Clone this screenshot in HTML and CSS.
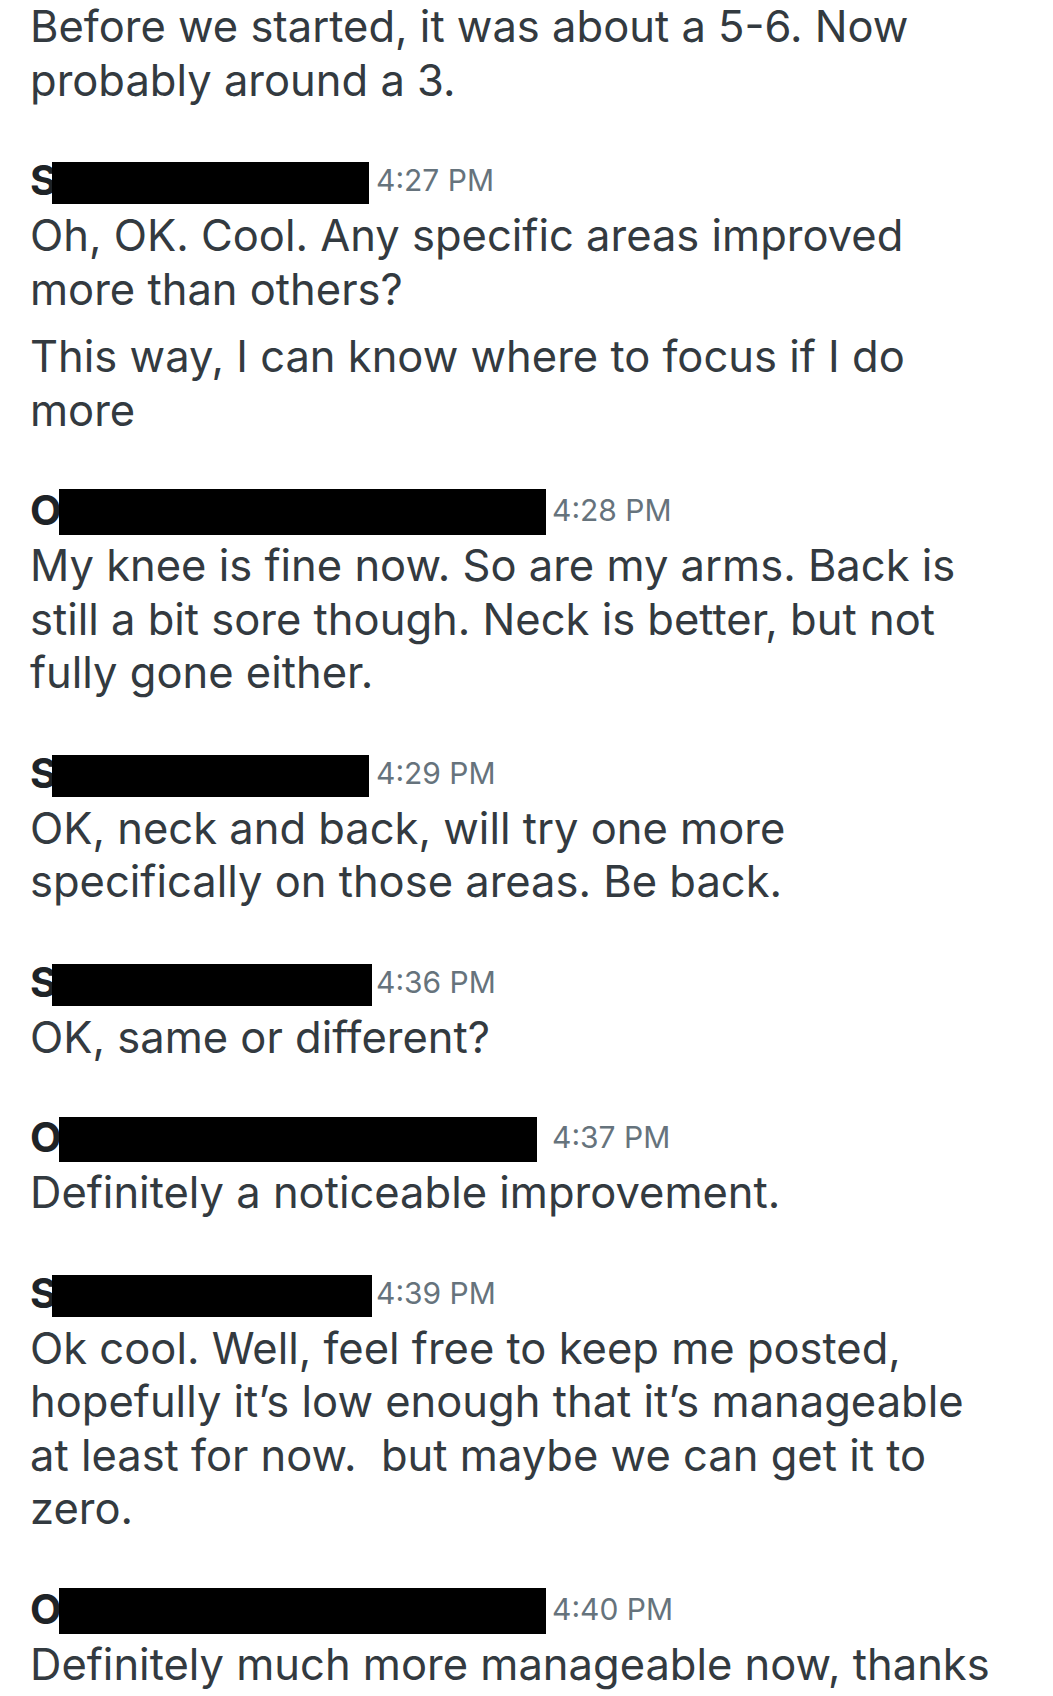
FILE: index.html
```html
<!DOCTYPE html>
<html lang="en">
<head>
<meta charset="utf-8">
<title>Chat</title>
<link rel="stylesheet" href="styles.css">
</head>
<body>
<main class="chat">
  <p class="msg">Before we started, it was about a 5-6. Now<br>probably around a 3.</p>

  <section class="group">
    <header class="head">
      <span class="name name-s">S<span class="redact redact-s1"></span></span>
      <time class="time">4:27 PM</time>
    </header>
    <p class="msg">Oh, OK. Cool. Any specific areas improved<br>more than others?</p>
    <p class="msg">This way, I can know where to focus if I do<br>more</p>
  </section>

  <section class="group">
    <header class="head">
      <span class="name name-o">O<span class="redact redact-o1"></span></span>
      <time class="time">4:28 PM</time>
    </header>
    <p class="msg">My knee is fine now. So are my arms. Back is<br>still a bit sore though. Neck is better, but not<br>fully gone either.</p>
  </section>

  <section class="group">
    <header class="head">
      <span class="name name-s">S<span class="redact redact-s1"></span></span>
      <time class="time">4:29 PM</time>
    </header>
    <p class="msg">OK, neck and back, will try one more<br>specifically on those areas. Be back.</p>
  </section>

  <section class="group">
    <header class="head">
      <span class="name name-s">S<span class="redact redact-s2"></span></span>
      <time class="time">4:36 PM</time>
    </header>
    <p class="msg">OK, same or different?</p>
  </section>

  <section class="group">
    <header class="head">
      <span class="name name-o">O<span class="redact redact-o2"></span></span>
      <time class="time">4:37 PM</time>
    </header>
    <p class="msg">Definitely a noticeable improvement.</p>
  </section>

  <section class="group">
    <header class="head">
      <span class="name name-s">S<span class="redact redact-s2"></span></span>
      <time class="time">4:39 PM</time>
    </header>
    <p class="msg">Ok cool. Well, feel free to keep me posted,<br>hopefully it’s low enough that it’s manageable<br>at least for now.&nbsp; but maybe we can get it to<br>zero.</p>
  </section>

  <section class="group">
    <header class="head">
      <span class="name name-o">O<span class="redact redact-o1"></span></span>
      <time class="time">4:40 PM</time>
    </header>
    <p class="msg">Definitely much more manageable now, thanks</p>
  </section>
</main>
</body>
</html>
```

FILE: styles.css
```css
html, body {
  margin: 0;
  padding: 0;
  background: #ffffff;
}

.chat {
  padding: 0 0 0 30px;
  font-family: "Inter", "Liberation Sans", sans-serif;
  color: #333a40;
}

.msg {
  margin: 0;
  font-size: 43.5px;
  line-height: 53.5px;
  white-space: nowrap;
}

.msg + .msg {
  margin-top: 14px;
}

.group {
  margin-top: 44px;
}

.head {
  display: flex;
  align-items: center;
  height: 58px;
}

.name {
  position: relative;
  display: inline-block;
  font-size: 41px;
  font-weight: 700;
  color: #1e2327;
  line-height: 58px;
}

.name-s {
  width: 346px;
}

.name-o {
  width: 522px;
}

.redact {
  position: absolute;
  top: 11px;
  height: 42px;
  background: #000000;
}

.redact-s1 {
  left: 22px;
  width: 317px;
}

.redact-s2 {
  left: 22px;
  width: 320px;
}

.redact-o1 {
  left: 29px;
  width: 487px;
  top: 8px;
  height: 46px;
}

.redact-o2 {
  left: 29px;
  width: 478px;
  top: 9px;
  height: 45px;
}

.time {
  font-size: 30px;
  color: #66737c;
}
```
